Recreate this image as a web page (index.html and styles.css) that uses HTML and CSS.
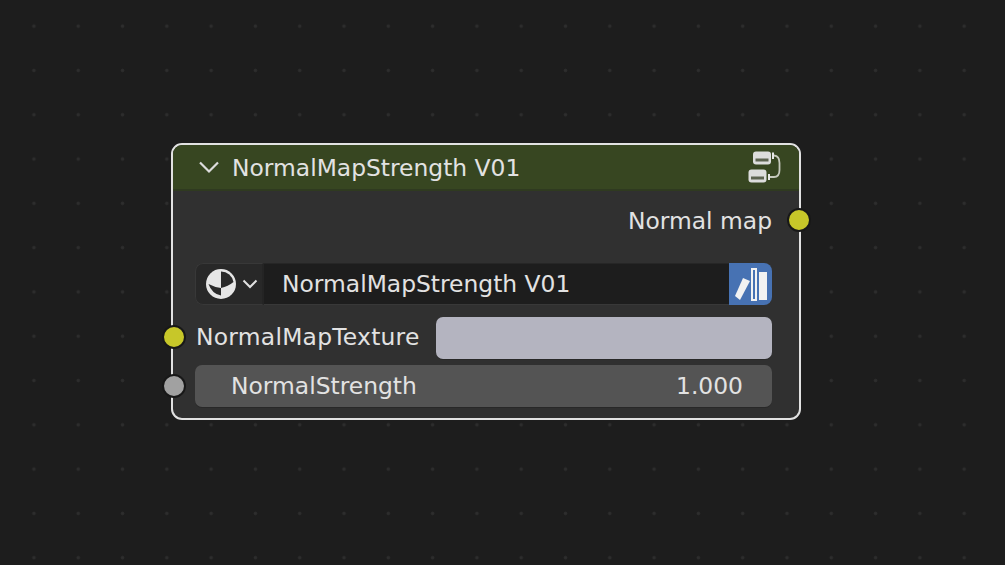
FILE: index.html
```html
<!DOCTYPE html>
<html lang="en">
<head>
<meta charset="utf-8">
<title>NormalMapStrength V01</title>
<link rel="stylesheet" href="styles.css">
</head>
<body>
<main class="canvas">
  <section class="node">
    <header class="node-head">
      <svg class="collapse" viewBox="0 0 22 14"><path d="M2 2.5 L11 11.5 L20 2.5"/></svg>
      <span class="node-title">NormalMapStrength V01</span>
      <svg class="group-icon" viewBox="0 0 34 34">
        <rect class="gi-box" x="6" y="1.5" width="18" height="13" rx="3"/>
        <rect class="gi-slot" x="8.5" y="8.5" width="13" height="3"/>
        <rect class="gi-box" x="1.5" y="19.5" width="18" height="13" rx="3"/>
        <rect class="gi-slot" x="4" y="26.5" width="13" height="3"/>
        <path class="gi-link" d="M25 5.5 H27 Q32.5 6 32.5 13 V20 Q32.5 27 27 27 H21"/>
        <path class="gi-tip" d="M26 2.5 V9 M22 24 V30"/>
      </svg>
    </header>
    <div class="node-body">
      <div class="row-output">
        <span class="label">Normal map</span>
        <i class="socket socket-out socket-yellow"></i>
      </div>
      <div class="datablock">
        <div class="db-type">
          <svg class="ball" viewBox="0 0 32 32">
            <circle class="ball-light" cx="16" cy="16" r="15"/>
            <path class="ball-dark" d="M16 3.5 A12.5 12.5 0 0 1 28.5 14 Q23 18.5 16 20 Z"/>
            <path class="ball-dark" d="M3.5 16 Q9 19 16 20 V27.5 Q7 26 3.5 16 Z"/>
          </svg>
          <svg class="mini-chevron" viewBox="0 0 16 10"><path d="M1.5 1.5 L8 8 L14.5 1.5"/></svg>
        </div>
        <div class="db-name">NormalMapStrength V01</div>
        <div class="db-lib">
          <svg viewBox="0 0 43 42">
            <path class="lib-fill" d="M6 33 L14 15 L21 18 L11 37 Z"/>
            <rect class="lib-outline" x="23" y="6" width="4" height="31"/>
            <rect class="lib-solid" x="30" y="9" width="8" height="28"/>
          </svg>
        </div>
      </div>
      <div class="row-texture">
        <i class="socket socket-in socket-yellow"></i>
        <span class="label">NormalMapTexture</span>
        <div class="texture-swatch"></div>
      </div>
      <div class="row-strength">
        <i class="socket socket-in socket-grey"></i>
        <span class="label">NormalStrength</span>
        <span class="value">1.000</span>
      </div>
    </div>
  </section>
</main>
</body>
</html>
```

FILE: styles.css
```css
* { box-sizing: border-box; }
html, body { margin: 0; height: 100%; }
body { background: #1d1d1d; overflow: hidden; }

.canvas {
  position: relative;
  width: 1005px;
  height: 565px;
  background-color: #1d1d1d;
  background-image: radial-gradient(circle at center, #2e2e2e 0, #2b2b2b 1.6px, transparent 2.2px);
  background-size: 44.3px 44.3px;
  background-position: 11.8px 4px;
  font-family: "DejaVu Sans", sans-serif;
  font-size: 23.4px;
  color: #e2e2e2;
}

.node {
  position: absolute;
  left: 171px;
  top: 143px;
  width: 630px;
  height: 277px;
  background: #303030;
  border: 2px solid #e2e2e2;
  border-radius: 11px;
}

.node-head {
  display: flex;
  align-items: center;
  height: 46px;
  padding-left: 25px;
  padding-right: 18px;
  background: #374621;
  border-bottom: 2px solid #2f3a20;
  border-radius: 9px 9px 0 0;
}
.collapse { width: 22px; height: 14px; margin-right: 12px; }
.collapse path { fill: none; stroke: #dcdcdc; stroke-width: 2.2; }
.node-title { flex: 1; white-space: nowrap; padding-top: 1px; }
.group-icon { width: 34px; height: 34px; }
.gi-box { fill: #dcdcdc; }
.gi-slot { fill: #5c6350; }
.gi-link { fill: none; stroke: #c6c9bd; stroke-width: 1.8; }
.gi-tip { fill: none; stroke: #e6e6e6; stroke-width: 2; }

.node-body {
  display: flex;
  flex-direction: column;
  padding: 0 27px 0 22px;
}
.label { white-space: nowrap; }

.socket {
  position: absolute;
  width: 24px;
  height: 24px;
  border-radius: 50%;
  border: 2px solid #181818;
}
.socket-yellow { background: #c7c729; }
.socket-grey { background: #a1a1a1; }
.socket-in { left: -11px; top: 50%; margin-top: -12px; }
.socket-out { right: -12px; top: 50%; margin-top: -12px; }

.row-output {
  display: flex;
  justify-content: flex-end;
  align-items: center;
  height: 42px;
  margin: 8px -27px 0 -22px;
  padding-right: 27px;
  position: relative;
}
.row-output .label { padding-top: 2px; }

.datablock {
  display: flex;
  height: 42px;
  margin-top: 22px;
  border-radius: 8px;
  overflow: hidden;
}
.db-type {
  display: flex;
  align-items: center;
  width: 69px;
  padding-left: 9px;
  gap: 5px;
  background: #282828;
  border: 1px solid #383838;
  border-right: 2px solid #242424;
  border-radius: 8px 0 0 8px;
}
.ball { width: 32px; height: 32px; flex: none; }
.ball-light { fill: #e6e6e6; }
.ball-dark { fill: #2a2a2a; }
.mini-chevron { width: 16px; height: 10px; flex: none; }
.mini-chevron path { fill: none; stroke: #e0e0e0; stroke-width: 2; }
.db-name {
  flex: 1;
  padding-left: 18px;
  line-height: 40px;
  background: #1d1d1d;
  border-top: 1px solid #262626;
  border-bottom: 1px solid #383838;
  white-space: nowrap;
}
.db-lib { width: 43px; background: #4772b3; }
.db-lib svg { display: block; width: 43px; height: 42px; }
.lib-fill, .lib-solid { fill: #f2f2f2; }
.lib-outline { fill: none; stroke: #f2f2f2; stroke-width: 2; }

.row-texture {
  display: flex;
  align-items: center;
  height: 42px;
  margin: 12px -27px 0 -22px;
  padding: 0 27px 0 23px;
  position: relative;
}
.row-texture .label { flex: 0 0 240px; margin-top: -2px; letter-spacing: 0.25px; }
.row-texture .socket { margin-top: -13px; }
.texture-swatch {
  flex: 1;
  height: 42px;
  background: #b4b4c0;
  border-radius: 7px;
  box-shadow: 0 1px 0 #282828;
}

.row-strength {
  display: flex;
  justify-content: space-between;
  align-items: center;
  height: 42px;
  margin: 6px -27px 0 -22px;
  padding: 0 56px 0 58px;
  position: relative;
}
.row-strength::before {
  content: "";
  position: absolute;
  left: 22px;
  right: 27px;
  top: 0;
  bottom: 0;
  background: #545454;
  border-radius: 7px;
  box-shadow: 0 1px 0 #282828;
}
.row-strength .label, .row-strength .value { position: relative; }
.row-strength .socket { z-index: 1; }
```
